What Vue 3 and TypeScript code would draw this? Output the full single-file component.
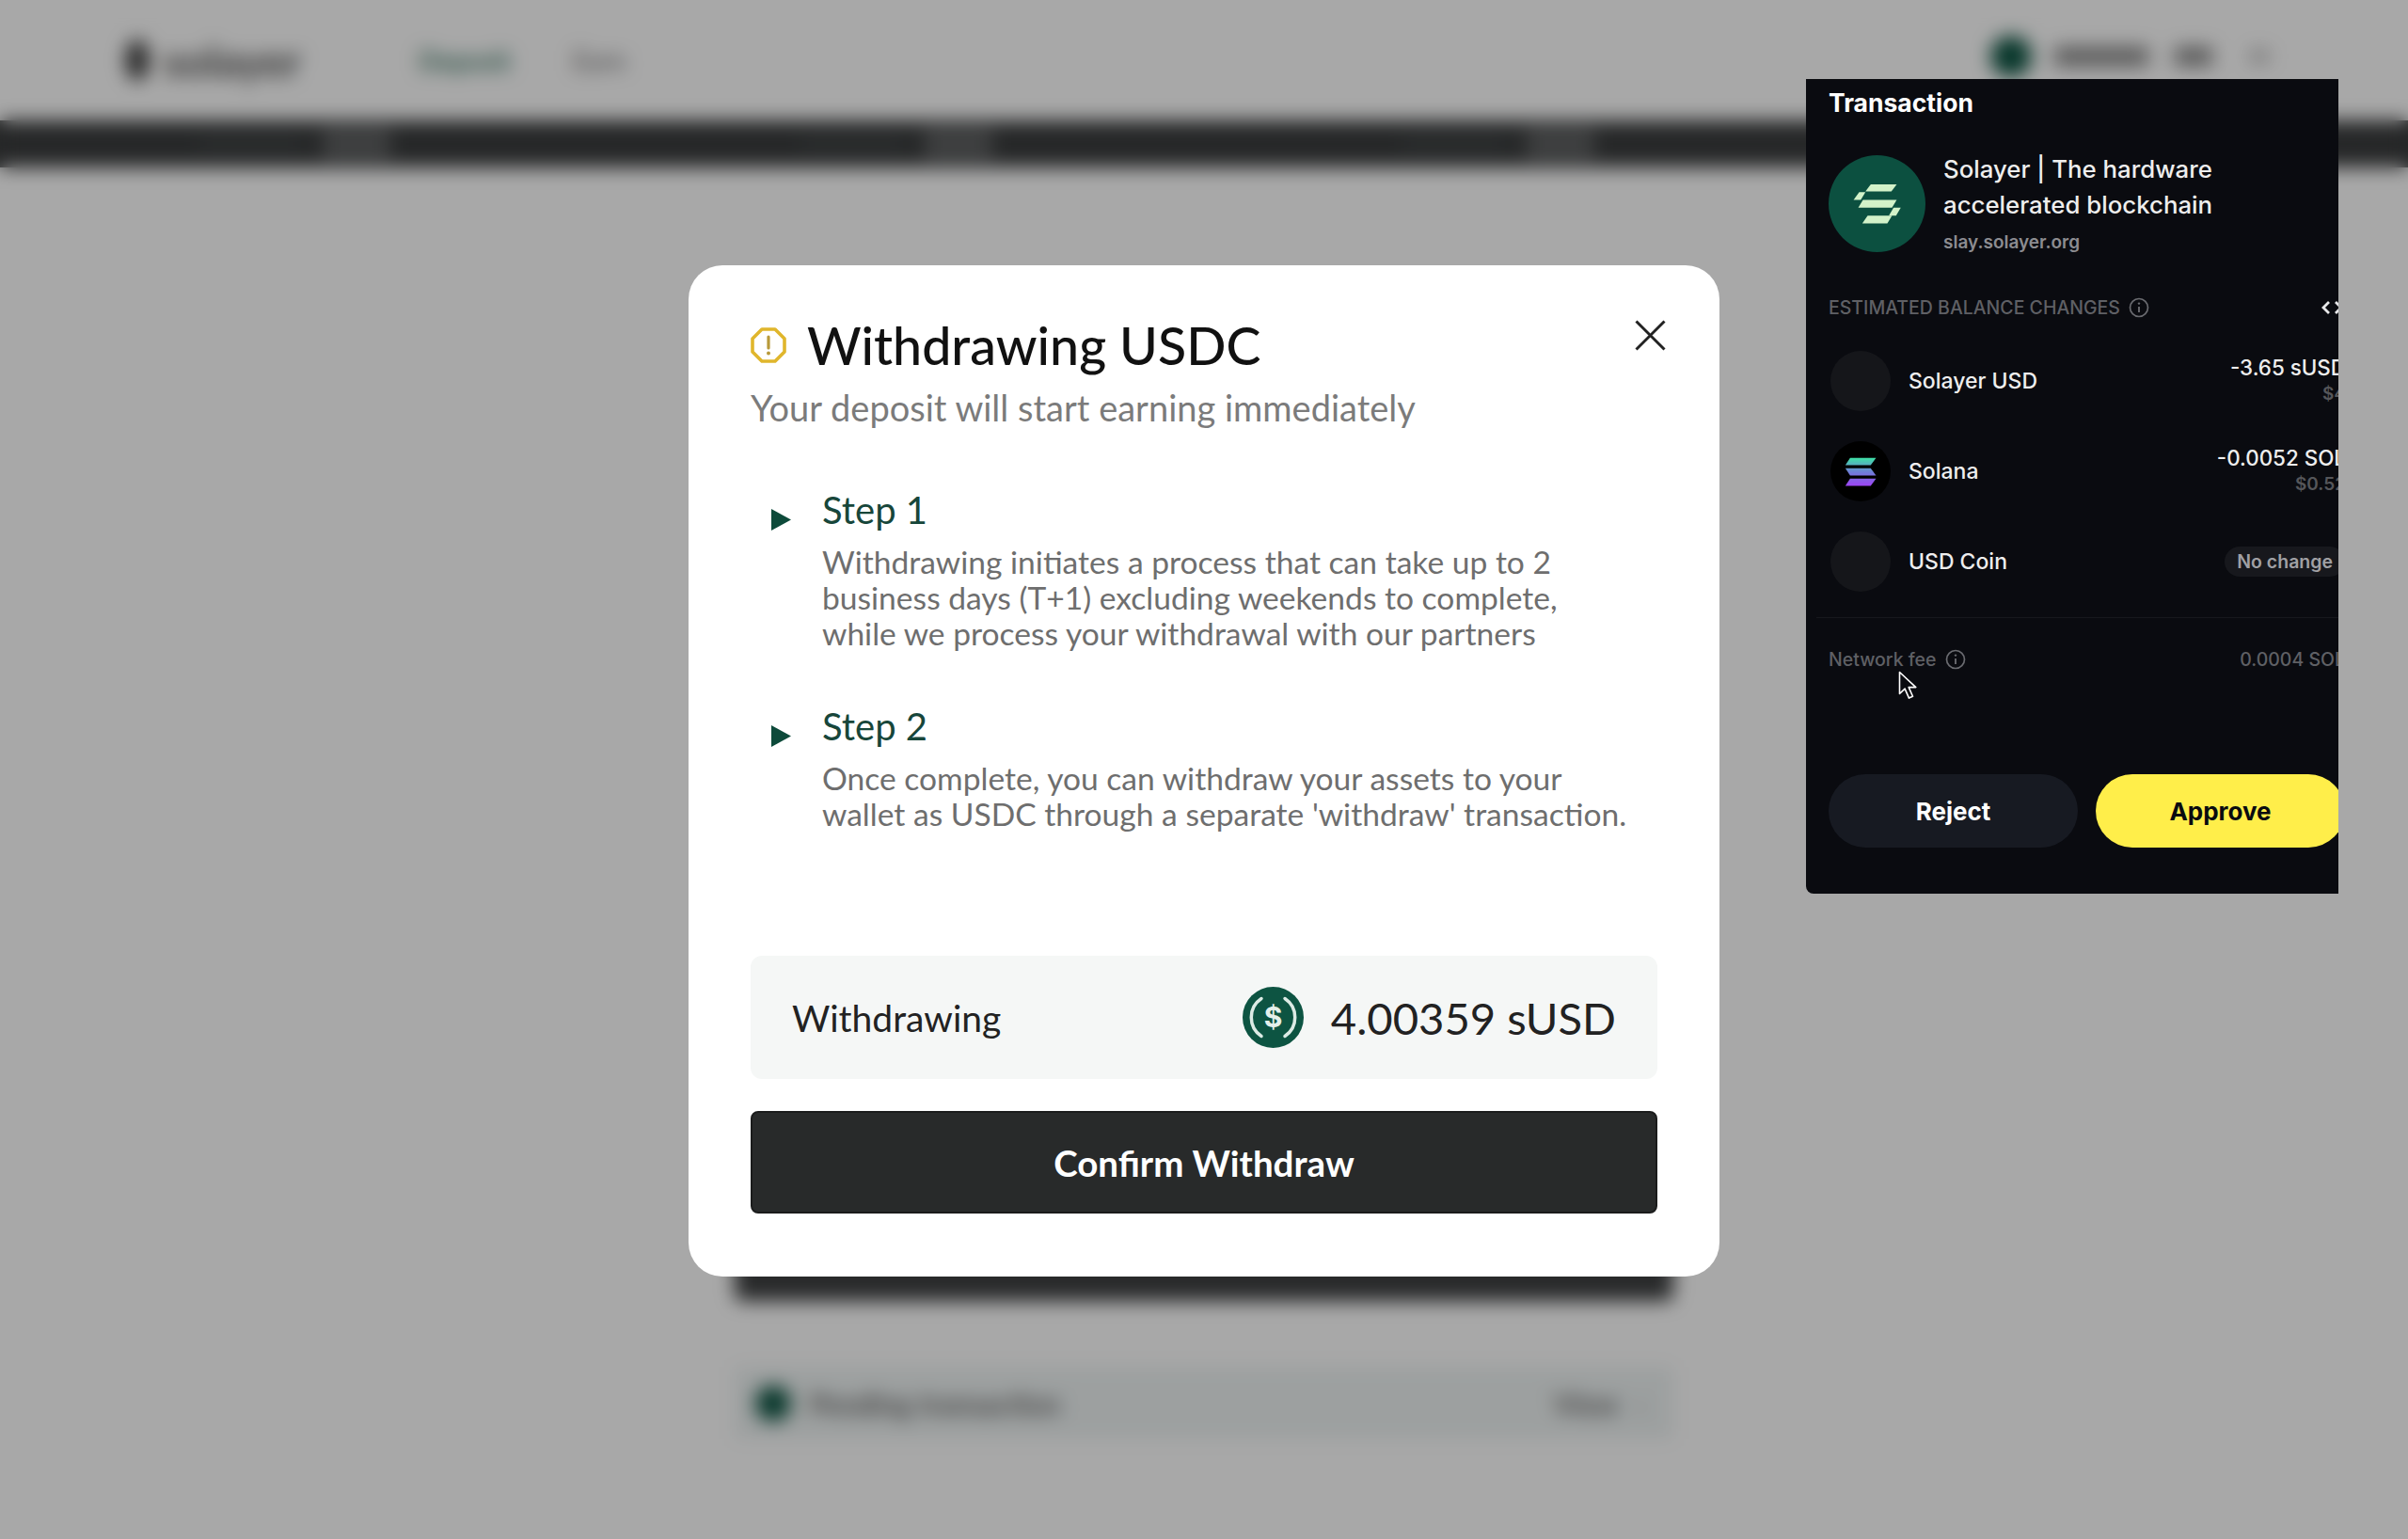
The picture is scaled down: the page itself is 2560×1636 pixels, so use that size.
<template>
  <div class="screen">
    <div class="page">
      <header class="topbar">
        <div class="brand">
          <span class="brand-mark"></span>
          <span class="brand-name">solayer</span>
        </div>
        <nav class="nav">
          <span class="nav-active">Deposit</span>
          <span class="nav-link">Earn</span>
        </nav>
        <div class="account">
          <span class="account-dot"></span>
          <span class="account-addr"></span>
          <span class="account-bal"></span>
          <span class="account-caret"></span>
        </div>
      </header>
      <div class="ticker">
        <div v-for="n in 5" :key="n" class="ticker-item">
          <span class="ticker-dim"></span>
          <span class="ticker-light"></span>
        </div>
      </div>
      <main class="content">
        <div class="behind-button"></div>
        <div class="pending">
          <span class="pending-dot"></span>
          <span class="pending-text">Pending transaction</span>
          <span class="pending-view">View</span>
          <span class="pending-caret">›</span>
        </div>
      </main>
    </div>

    <div class="overlay"></div>

    <section class="modal">
      <button class="close" aria-label="Close">
        <svg width="33" height="33" viewBox="0 0 33 33">
          <path d="M1.5 1.5 31.5 31.5M31.5 1.5 1.5 31.5" stroke="#222" stroke-width="3" fill="none" />
        </svg>
      </button>
      <div class="title-row">
        <svg class="warn" width="38" height="38" viewBox="0 0 38 38">
          <polygon points="12,2 26,2 36,12 36,26 26,36 12,36 2,26 2,12" fill="none" stroke="#e0b62c" stroke-width="3.6" stroke-linejoin="round" />
          <path d="M19 10v12" stroke="#b8993a" stroke-width="3.2" stroke-linecap="round" />
          <circle cx="19" cy="27.5" r="2" fill="#b8993a" />
        </svg>
        <h1 class="title">Withdrawing USDC</h1>
      </div>
      <p class="subtitle">Your deposit will start earning immediately</p>

      <div class="steps">
        <div v-for="step in steps" :key="step.label" class="step">
          <svg class="step-arrow" width="21" height="23" viewBox="0 0 21 23">
            <polygon points="0,0 21,11.5 0,23" fill="#0d4a3a" />
          </svg>
          <div>
            <div class="step-label">{{ step.label }}</div>
            <p class="step-body">
              <span v-for="line in step.lines" :key="line" class="step-line">{{ line }}</span>
            </p>
          </div>
        </div>
      </div>

      <div class="summary">
        <span class="summary-label">Withdrawing</span>
        <div class="summary-value">
          <svg width="65" height="65" viewBox="0 0 65 65">
            <circle cx="32.5" cy="32.5" r="32.5" fill="#0d5442" />
            <path d="M20 12.5A24 24 0 0 0 20 52.5M45 12.5A24 24 0 0 1 45 52.5" fill="none" stroke="#dcebe5" stroke-width="3.5" stroke-linecap="round" />
            <text x="32.5" y="43" text-anchor="middle" class="coin-glyph">$</text>
          </svg>
          <span class="summary-amount">4.00359 sUSD</span>
        </div>
      </div>

      <button class="confirm">Confirm Withdraw</button>
    </section>

    <aside class="wallet">
      <div class="wallet-inner">
        <div class="wallet-title">Transaction</div>
        <div class="site">
          <svg width="103" height="103" viewBox="42 42 310 310">
            <circle cx="197" cy="197" r="155" fill="#0c5040" />
            <g fill="#d3f2c9">
              <polygon points="177,135 260,135 243,158 160,158" />
              <polygon points="140,160 160,160 145,185 122,185" />
              <polygon points="152,185 260,185 245,210 137,210" />
              <polygon points="250,210 273,210 258,235 235,235" />
              <polygon points="167,235 245,235 230,260 150,260" />
            </g>
          </svg>
          <div class="site-text">
            <div class="site-name">Solayer | The hardware<br />accelerated blockchain</div>
            <div class="site-url">slay.solayer.org</div>
          </div>
        </div>

        <div class="changes-head">
          <span class="changes-label">ESTIMATED BALANCE CHANGES</span>
          <svg class="info" width="22" height="22" viewBox="0 0 22 22">
            <circle cx="11" cy="11" r="9.5" fill="none" stroke="#6a6b70" stroke-width="1.7" />
            <path d="M11 10v6" stroke="#6a6b70" stroke-width="1.9" />
            <circle cx="11" cy="6.6" r="1.2" fill="#6a6b70" />
          </svg>
          <svg class="pager" width="26" height="18" viewBox="0 0 26 18">
            <path d="M8 3 2 9l6 6M15 3l6 6-6 6" fill="none" stroke="#e8e8ea" stroke-width="2.8" />
          </svg>
        </div>

        <div class="tokens">
          <div v-for="token in tokens" :key="token.name" class="token">
            <span v-if="token.icon === 'blank'" class="token-icon"></span>
            <svg v-else width="64" height="64" viewBox="48 27 190 190">
              <defs>
                <linearGradient id="sol" gradientUnits="userSpaceOnUse" x1="143" y1="80" x2="143" y2="168">
                  <stop offset="0" stop-color="#3ee0a6" />
                  <stop offset="0.5" stop-color="#6f7fd8" />
                  <stop offset="1" stop-color="#9d45f5" />
                </linearGradient>
              </defs>
              <circle cx="143" cy="122" r="95" fill="#000" />
              <g fill="url(#sol)">
                <polygon points="110,80 192,80 175,103 95,103" />
                <polygon points="95,112 175,112 192,135 110,135" />
                <polygon points="110,145 192,145 175,168 95,168" />
              </g>
            </svg>
            <span class="token-name">{{ token.name }}</span>
            <span v-if="token.pill" class="token-pill">{{ token.pill }}</span>
            <div v-else class="token-change">
              <div class="token-amount">{{ token.amount }}</div>
              <div class="token-usd">{{ token.usd }}</div>
            </div>
          </div>
        </div>

        <div class="divider"></div>

        <div class="fee">
          <span>Network fee</span>
          <svg class="info" width="22" height="22" viewBox="0 0 22 22">
            <circle cx="11" cy="11" r="9.5" fill="none" stroke="#6a6b70" stroke-width="1.7" />
            <path d="M11 10v6" stroke="#6a6b70" stroke-width="1.9" />
            <circle cx="11" cy="6.6" r="1.2" fill="#6a6b70" />
          </svg>
          <span class="fee-value">0.0004 SOL</span>
        </div>

        <div class="actions">
          <button class="reject">Reject</button>
          <button class="approve">Approve</button>
        </div>
      </div>
      <svg class="cursor" width="20" height="31" viewBox="0 0 20 31">
        <path d="M1.5 1.5v23l5.6-5.4 4.4 10 4-1.8-4.3-9.7h7.6z" fill="#0a0b10" stroke="#fff" stroke-width="1.6" stroke-linejoin="round" />
      </svg>
    </aside>
  </div>
</template>

<script setup lang="ts">
interface Step {
  label: string;
  lines: string[];
}

interface Token {
  name: string;
  icon: 'blank' | 'solana';
  amount?: string;
  usd?: string;
  pill?: string;
}

const steps: Step[] = [
  {
    label: 'Step 1',
    lines: [
      'Withdrawing initiates a process that can take up to 2',
      'business days (T+1) excluding weekends to complete,',
      'while we process your withdrawal with our partners',
    ],
  },
  {
    label: 'Step 2',
    lines: [
      'Once complete, you can withdraw your assets to your',
      "wallet as USDC through a separate 'withdraw' transaction.",
    ],
  },
];

const tokens: Token[] = [
  { name: 'Solayer USD', icon: 'blank', amount: '-3.65 sUSD', usd: '$4' },
  { name: 'Solana', icon: 'solana', amount: '-0.0052 SOL', usd: '$0.52' },
  { name: 'USD Coin', icon: 'blank', pill: 'No change' },
];
</script>

<style>
html,
body {
  margin: 0;
  background: #a8a8a8;
}
</style>

<style scoped>
.screen {
  position: relative;
  width: 2560px;
  height: 1636px;
  overflow: hidden;
  font-family: Lato, "Liberation Sans", sans-serif;
}

.page {
  height: 100%;
  background: #fff;
  color: #333;
}

.topbar {
  height: 128px;
  display: flex;
  align-items: center;
  padding: 0 148px 0 133px;
  box-sizing: border-box;
}

.brand {
  display: flex;
  align-items: center;
  gap: 15px;
  width: 312px;
}

.brand-mark {
  width: 26px;
  height: 44px;
  border-radius: 50%;
  background: #444;
}

.brand-name {
  font-size: 46px;
  font-weight: 700;
  color: #555;
}

.nav {
  display: flex;
  gap: 66px;
  font-size: 28px;
  font-weight: 700;
}

.nav-active {
  color: #3f7a68;
}

.nav-link {
  color: #888;
}

.account {
  margin-left: auto;
  margin-bottom: 8px;
  display: flex;
  align-items: center;
}

.account-dot {
  width: 44px;
  height: 44px;
  border-radius: 50%;
  background: #0d5442;
  margin-right: 24px;
}

.account-addr {
  width: 100px;
  height: 20px;
  background: #888;
  margin-right: 28px;
}

.account-bal {
  width: 40px;
  height: 20px;
  background: #888;
  margin-right: 40px;
}

.account-caret {
  width: 20px;
  height: 14px;
  background: #bbb;
}

.ticker {
  height: 50px;
  display: flex;
  background: #3b3d3e;
  overflow: hidden;
}

.ticker-item {
  flex: 0 0 640px;
  display: flex;
  align-items: center;
  justify-content: flex-end;
  gap: 22px;
  padding-right: 225px;
  box-sizing: border-box;
}

.ticker-dim {
  width: 110px;
  height: 18px;
  background: #414546;
}

.ticker-light {
  width: 72px;
  height: 34px;
  background: #606263;
}

.content {
  width: 998px;
  margin: 0 auto;
  padding-top: 1097px;
}

.behind-button {
  height: 108px;
  background: #3e4041;
  border-radius: 8px;
}

.pending {
  margin-top: 70px;
  height: 77px;
  display: flex;
  align-items: center;
  padding: 0 30px 0 22px;
  background: #eef3f3;
  font-size: 30px;
}

.pending-dot {
  width: 38px;
  height: 38px;
  border-radius: 50%;
  background: #0d5442;
  margin-right: 20px;
}

.pending-text {
  color: #666;
  font-weight: 700;
}

.pending-view {
  margin-left: auto;
  color: #666;
  font-weight: 700;
}

.pending-caret {
  margin-left: 20px;
  color: #888;
}

.overlay {
  position: absolute;
  inset: 0;
  background: rgba(0, 0, 0, 0.34);
  backdrop-filter: blur(10px);
}

.modal {
  position: absolute;
  left: 732px;
  top: 282px;
  width: 1096px;
  padding: 53px 66px 67px;
  box-sizing: border-box;
  background: #fff;
  border-radius: 36px;
}

.close {
  position: absolute;
  right: 57px;
  top: 58px;
  padding: 0;
  border: none;
  background: none;
  line-height: 0;
}

.title-row {
  display: flex;
  align-items: center;
  gap: 22px;
}

.title {
  margin: 0;
  font-size: 55.5px;
  line-height: 64px;
  font-weight: 500;
  color: #111;
}

.subtitle {
  margin: 10px 0 0;
  font-size: 38px;
  line-height: 48px;
  color: #7b7b7b;
}

.steps {
  margin-top: 63px;
  display: flex;
  flex-direction: column;
  gap: 58px;
}

.step {
  display: flex;
}

.step-arrow {
  flex: none;
  margin: 21px 33px 0 22px;
}

.step-label {
  font-size: 40px;
  line-height: 44px;
  color: #17463a;
}

.step-body {
  margin: 14px 0 0;
  font-size: 33.6px;
  line-height: 38px;
  color: #6e6e6e;
}

.step-line {
  display: block;
  white-space: nowrap;
}

.summary {
  margin-top: 132px;
  height: 131px;
  padding: 0 44px;
  display: flex;
  align-items: center;
  justify-content: space-between;
  background: #f5f7f6;
  border-radius: 12px;
}

.summary-label {
  font-size: 39px;
  color: #222;
}

.summary-value {
  display: flex;
  align-items: center;
  gap: 29px;
}

.summary-amount {
  font-size: 47.2px;
  color: #222;
}

.coin-glyph {
  font-family: Inter, sans-serif;
  font-size: 30px;
  font-weight: 700;
  fill: #e4f0eb;
}

.confirm {
  display: block;
  width: 100%;
  height: 109px;
  margin-top: 34px;
  padding: 0;
  border: 2px solid #1b1c1c;
  border-radius: 8px;
  background: #282a2a;
  color: #fff;
  font-family: inherit;
  font-size: 38.5px;
  font-weight: 700;
}

.wallet {
  position: absolute;
  left: 1920px;
  top: 84px;
  width: 566px;
  height: 866px;
  overflow: hidden;
  background: #0a0b10;
  border-bottom-left-radius: 8px;
  font-family: Inter, "Liberation Sans", sans-serif;
  color: #eee;
}

.wallet-inner {
  width: 549px;
  margin-left: 24px;
  padding-top: 9px;
}

.wallet-title {
  font-size: 26.5px;
  line-height: 32px;
  font-weight: 700;
  color: #fff;
}

.site {
  margin-top: 36px;
  display: flex;
  align-items: center;
  gap: 19px;
}

.site-name {
  font-size: 25.8px;
  line-height: 38px;
  font-weight: 500;
  color: #eee;
}

.site-url {
  margin-top: 7px;
  font-size: 19px;
  line-height: 28px;
  font-weight: 600;
  color: #8c8c90;
}

.changes-head {
  margin-top: 43px;
  height: 24px;
  display: flex;
  align-items: center;
  gap: 9px;
}

.changes-label {
  font-size: 19.5px;
  font-weight: 500;
  color: #5f6065;
}

.pager {
  margin-left: auto;
  margin-right: -1px;
}

.tokens {
  margin-top: 34px;
  display: flex;
  flex-direction: column;
  gap: 32px;
}

.token {
  height: 64px;
  display: flex;
  align-items: center;
  gap: 19px;
  padding-left: 2px;
}

.token-icon {
  width: 64px;
  height: 64px;
  border-radius: 50%;
  background: #15161a;
}

.token-name {
  font-size: 23px;
  font-weight: 500;
}

.token-change {
  margin-left: auto;
  margin-right: -1px;
  text-align: right;
}

.token-amount {
  font-size: 22.4px;
  line-height: 28px;
  font-weight: 500;
}

.token-usd {
  font-size: 19px;
  line-height: 28px;
  font-weight: 600;
  color: #55565a;
}

.token-pill {
  margin-left: auto;
  padding: 0 13px;
  height: 32px;
  line-height: 32px;
  border-radius: 16px;
  background: #17181d;
  font-size: 19.5px;
  font-weight: 600;
  color: #a0a0a4;
}

.divider {
  margin: 27px 0 0 -13px;
  height: 1px;
  background: #17181d;
}

.fee {
  margin-top: 32px;
  height: 24px;
  display: flex;
  align-items: center;
  gap: 9px;
  font-size: 19.5px;
  font-weight: 500;
  color: #5f6065;
}

.fee-value {
  margin-left: auto;
}

.actions {
  margin-top: 110px;
  display: flex;
  gap: 19px;
}

.actions button {
  flex: 1;
  height: 78px;
  padding: 0;
  border: none;
  border-radius: 39px;
  font-family: inherit;
  font-size: 26px;
  font-weight: 700;
}

.reject {
  background: #171a22;
  color: #fff;
}

.approve {
  background: #ffee4a;
  color: #0a0b10;
}

.cursor {
  position: absolute;
  left: 98px;
  top: 629px;
}
</style>
